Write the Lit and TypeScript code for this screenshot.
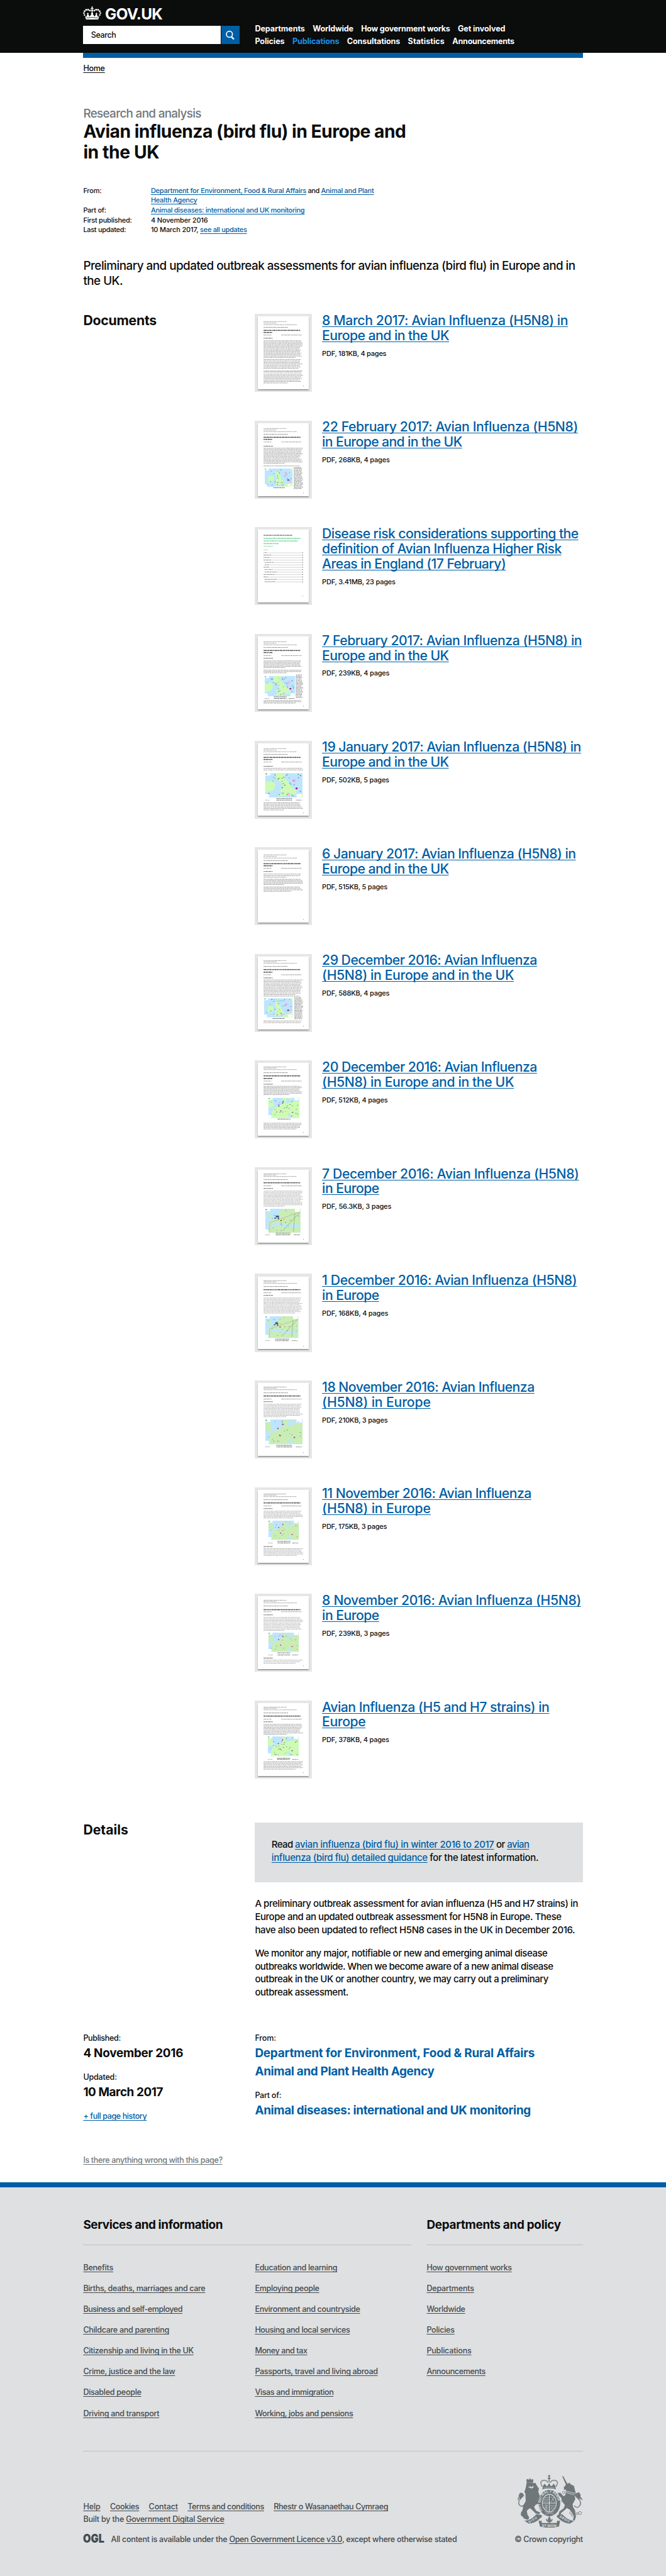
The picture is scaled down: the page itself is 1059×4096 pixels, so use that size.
import { LitElement, html, svg, css, unsafeCSS, nothing } from "lit";
import type { SVGTemplateResult } from "lit";
import { customElement, property } from "lit/decorators.js";

/** Page scale: the design grid is 1280 units wide. */
const SCALE = 1059 / 1280;
const u = (n: number) => unsafeCSS(`${(n * SCALE).toFixed(3)}px`);
/** Font sizes, corrected for the cap height of Inter. */
const f = (n: number) => unsafeCSS(`${(n * SCALE * 0.95).toFixed(3)}px`);

/** A run of text on one line, tracked so that it fills its measure. */
@customElement("fit-line")
class FitLine extends LitElement {
  static styles = css`
    :host {
      white-space: nowrap;
    }
  `;
  @property({ type: Number }) measure = 0;

  updated() {
    if (!this.measure) return;
    this.style.letterSpacing = "0";
    const natural = this.getBoundingClientRect().width;
    const count = (this.textContent ?? "").length;
    if (natural && count) {
      this.style.letterSpacing = `${((this.measure * SCALE - natural) / count).toFixed(4)}px`;
    }
  }

  render() {
    return html`<slot></slot>`;
  }
}

const fit = (measure: number, content: unknown) =>
  html`<fit-line .measure=${measure}>${content}</fit-line>`;

type Line = [number, string];
const lines = (items: Line[]) => items.map(([w, t], i) => html`${i ? html`<br />` : nothing}${fit(w, t)}`);

interface Thumb {
  title: number[];
  head: number[];
  date: number;
  blocks: [number, number][];
  map?: { x: number; y: number; w: number; h: number; kind: "uk" | "europe" | "channel" | "central" };
  side?: [number, number, number];
  caption?: number[];
  bold?: number[];
  soft?: boolean;
}

interface Doc {
  title: Line[];
  meta: Line;
  thumb: Thumb | "contents";
}

const DOCS: Doc[] = [
  {
    title: [[472.5, "8 March 2017: Avian Influenza (H5N8) in"], [244, "Europe and in the UK"]],
    meta: [123.5, "PDF, 181KB, 4 pages"],
    thumb: { head: [10, 13, 16, 21], title: [27, 31], date: 36, bold: [42], blocks: [[47, 79], [83, 100], [105, 107], [111, 128]] },
  },
  {
    title: [[491.5, "22 February 2017: Avian Influenza (H5N8)"], [269, "in Europe and in the UK"]],
    meta: [130, "PDF, 268KB, 4 pages"],
    thumb: {
      head: [10, 13, 16, 21], title: [27, 31], date: 36, bold: [44], blocks: [[48, 77], [82, 82]],
      map: { x: 13, y: 87, w: 54, h: 35, kind: "uk" }, side: [69, 85, 128], caption: [124],
    },
  },
  {
    title: [
      [492.5, "Disease risk considerations supporting the"],
      [460, "definition of Avian Influenza Higher Risk"],
      [353, "Areas in England (17 February)"],
    ],
    meta: [141, "PDF, 3.41MB, 23 pages"],
    thumb: "contents",
  },
  {
    title: [[499, "7 February 2017: Avian Influenza (H5N8) in"], [243.5, "Europe and in the UK"]],
    meta: [129.5, "PDF, 239KB, 4 pages"],
    thumb: {
      head: [10, 13, 16, 21], title: [27, 31], date: 37, bold: [42], blocks: [[47, 60], [65, 70], [123, 128]],
      map: { x: 13, y: 76, w: 59, h: 39, kind: "channel" }, side: [73, 74, 119], caption: [116, 119],
    },
  },
  {
    title: [[497.5, "19 January 2017: Avian Influenza (H5N8) in"], [243.5, "Europe and in the UK"]],
    meta: [129, "PDF, 502KB, 5 pages"],
    thumb: {
      head: [10, 13, 16, 21], title: [27, 31], date: 36, bold: [44], blocks: [[48, 51], [114, 128]],
      map: { x: 14, y: 57, w: 72, h: 47, kind: "channel" }, caption: [106, 109],
    },
  },
  {
    title: [[487.5, "6 January 2017: Avian Influenza (H5N8) in"], [243.5, "Europe and in the UK"]],
    meta: [125.5, "PDF, 515KB, 5 pages"],
    thumb: { head: [10, 13, 16, 21], title: [27, 31], date: 36, bold: [42], blocks: [[47, 53], [57, 67], [72, 80]] },
  },
  {
    title: [[413, "29 December 2016: Avian Influenza"], [368.5, "(H5N8) in Europe and in the UK"]],
    meta: [129.5, "PDF, 588KB, 4 pages"],
    thumb: {
      head: [8, 10, 13, 19], title: [25, 30], date: 35, bold: [41], blocks: [[45, 73], [76, 76], [124, 127]],
      map: { x: 12, y: 80, w: 55, h: 37, kind: "uk" }, side: [70, 79, 122], caption: [119],
    },
  },
  {
    title: [[413, "20 December 2016: Avian Influenza"], [368.5, "(H5N8) in Europe and in the UK"]],
    meta: [126, "PDF, 512KB, 4 pages"],
    thumb: {
      head: [8, 10, 13, 19], title: [25, 30], date: 35, bold: [41], blocks: [[45, 61], [116, 127]],
      map: { x: 20, y: 67, w: 60, h: 39, kind: "central" }, caption: [108],
    },
  },
  {
    title: [[493.5, "7 December 2016: Avian Influenza (H5N8)"], [109.5, "in Europe"]],
    meta: [133, "PDF, 56.3KB, 3 pages"],
    thumb: {
      head: [8, 10, 13, 19], title: [25], date: 31, bold: [36], blocks: [[41, 70]], soft: true,
      map: { x: 14, y: 75, w: 68, h: 46, kind: "europe" }, caption: [122, 125],
    },
  },
  {
    title: [[489.5, "1 December 2016: Avian Influenza (H5N8)"], [109.5, "in Europe"]],
    meta: [127, "PDF, 168KB, 4 pages"],
    thumb: {
      head: [8, 10, 13, 19], title: [25], date: 31, bold: [36], blocks: [[41, 70]], soft: true,
      map: { x: 14, y: 76, w: 64, h: 42, kind: "europe" }, caption: [120, 123],
    },
  },
  {
    title: [[408, "18 November 2016: Avian Influenza"], [208.5, "(H5N8) in Europe"]],
    meta: [126, "PDF, 210KB, 3 pages"],
    thumb: {
      head: [8, 10, 13, 19], title: [25], date: 31, bold: [36], blocks: [[41, 65]], soft: true,
      map: { x: 14, y: 70, w: 72, h: 48, kind: "central" }, caption: [120, 123],
    },
  },
  {
    title: [[402, "11 November 2016: Avian Influenza"], [208.5, "(H5N8) in Europe"]],
    meta: [124.5, "PDF, 175KB, 3 pages"],
    thumb: {
      head: [8, 10, 13, 19], title: [25], date: 31, bold: [36, 109], blocks: [[41, 54], [113, 126]], soft: true,
      map: { x: 20, y: 59, w: 59, h: 37, kind: "central" }, caption: [99, 102],
    },
  },
  {
    title: [[497.5, "8 November 2016: Avian Influenza (H5N8)"], [109.5, "in Europe"]],
    meta: [129.5, "PDF, 239KB, 3 pages"],
    thumb: {
      head: [8, 10, 13, 19], title: [26], date: 30, bold: [36, 119], blocks: [[41, 66], [123, 129]], soft: true,
      map: { x: 20, y: 70, w: 59, h: 37, kind: "central" }, caption: [109, 113],
    },
  },
  {
    title: [[436.5, "Avian Influenza (H5 and H7 strains) in"], [83.5, "Europe"]],
    meta: [129, "PDF, 378KB, 4 pages"],
    thumb: {
      head: [8, 10, 13, 19], title: [25], date: 31, bold: [36], blocks: [[41, 60], [113, 127]],
      map: { x: 19, y: 64, w: 60, h: 38, kind: "central" }, caption: [106, 108],
    },
  },
];

/** Small repeatable pseudo-random source, so every thumbnail differs but is stable. */
const noise = (seed: number) => {
  const v = Math.sin(seed * 12.9898) * 43758.5453;
  return v - Math.floor(v);
};

const textRow = (x1: number, x2: number, y: number, color: string, weight: number, seed: number) => {
  const parts: SVGTemplateResult[] = [];
  let x = x1;
  let i = 0;
  while (x < x2) {
    const w = Math.min(1.6 + noise(seed + i * 1.7) * 4.4, x2 - x);
    parts.push(svg`<rect x=${x} y=${y - weight / 2} width=${w} height=${weight} fill=${color}></rect>`);
    x += w + 0.7;
    i++;
  }
  return parts;
};

const MAPS = {
  uk: svg`<path d="M40 8 L52 10 L48 20 L56 24 L60 40 L70 52 L62 62 L36 66 L44 54 L38 48 L46 38 L38 28 Z M14 30 L30 28 L34 40 L28 50 L12 52 Z M70 62 L100 50 V70 H60 Z M88 0 H100 V14 Z"></path>`,
  channel: svg`<path d="M28 0 H54 L50 14 L62 26 L74 44 L84 50 L82 62 L60 64 L34 68 L46 56 L36 52 L48 42 L44 28 L30 20 Z M0 26 L22 22 L28 34 L22 50 L0 56 Z M92 62 H100 V70 H92 Z"></path>`,
  europe: svg`<path d="M30 22 L40 12 L50 0 H100 V48 L80 44 L66 52 L56 44 L48 46 L40 38 L30 44 L20 44 L14 34 L28 32 Z M10 14 L18 12 L20 26 L10 26 Z M12 54 L40 48 L60 56 L100 52 V70 H8 Z M8 40 L20 42 L18 52 L8 52 Z"></path>`,
  central: svg`<path d="M0 10 L10 6 L20 26 L12 34 L0 34 Z M44 24 L48 2 L60 0 L56 20 L78 14 L100 10 V70 H78 L66 52 L60 56 L70 70 H10 L12 44 L22 34 Z M66 0 H76 L70 12 Z"></path>`,
};

const mapDrawing = (m: NonNullable<Thumb["map"]>, seed: number, soft: boolean) => svg`
  <svg x=${m.x} y=${m.y} width=${m.w} height=${m.h} viewBox="0 0 100 70" preserveAspectRatio="none">
    <rect width="100" height="70" fill="#bde5ff"></rect>
    <g fill=${soft ? "#c9edb4" : "#cdfbb5"}>${MAPS[m.kind]}</g>
    <rect x="0" y="0" width="14" height="7" fill="#fff"></rect>
    <rect x="1" y="1" width="4" height="3" fill="#39a08c"></rect>
    <rect x="0" y="60" width="10" height="10" fill="#fff"></rect>
    <rect x="84" y=${m.kind === "central" || m.kind === "europe" ? 0 : 60} width="14" height="9" fill="#fff"></rect>
    ${m.kind === "uk" || m.kind === "channel"
      ? svg`<circle cx="78" cy="22" r="5" fill="#f9b3e0"></circle><circle cx="62" cy="60" r="4" fill="#f9b3e0"></circle><circle cx="84" cy="44" r="3" fill="#a3249a"></circle>`
      : nothing}
    ${m.kind === "europe"
      ? svg`<g fill="none"><path d="M12 70 L14 40 L98 10" stroke="#cc9fae" stroke-width="1.2"></path><path d="M98 10 L50 64 M84 12 L80 66" stroke="#6d8f7c" stroke-width="1"></path></g>
          <g fill="#2c4f8c"><rect x="30" y="20" width="9" height="5"></rect><rect x="26" y="26" width="5" height="3"></rect><rect x="36" y="25" width="3" height="6"></rect></g>
          <rect x="43" y="33" width="4" height="3" fill="#c63a3a"></rect>`
      : nothing}
    ${m.kind === "central"
      ? svg`<g fill="#c0278f"><rect x="46" y="12" width="3" height="4"></rect><rect x="32" y="24" width="4" height="3"></rect><rect x="38" y="44" width="4" height="3"></rect><rect x="76" y="49" width="4" height="3"></rect></g>`
      : nothing}
    ${Array.from({ length: soft ? 16 : 30 }, (_, i) => svg`<rect x=${8 + noise(seed + i) * 86} y=${3 + noise(seed * 3 + i * 2.3) * 62} width=${1.4 + noise(i) * 2.4} height="1.4" fill=${soft ? "#64786e" : "#2c3b37"}></rect>`)}
  </svg>
`;

const CONTENTS_ROWS = [0, 1, 2, 3, 4, 5, 6, 7, 8, 9, 10, 11, 12];

const thumbnail = (t: Thumb | "contents", seed: number) => {
  if (t === "contents") {
    const indent = [4, 5, 7, 8, 11, 12];
    return svg`
      ${textRow(11, 66, 11, "#444", 1.2, 3)}
      ${textRow(11, 82, 17, "#7fd8a2", 1.9, 4)}
      ${textRow(11, 77, 22, "#7fd8a2", 1.9, 5)}
      ${textRow(11, 40, 27, "#7fd8a2", 1.9, 6)}
      ${textRow(11, 29, 32, "#8fd9aa", 1.4, 7)}
      ${textRow(11, 20, 39, "#8fd9aa", 1.2, 8)}
      ${CONTENTS_ROWS.map((r) => {
        const x = indent.includes(r) ? 13 : 11;
        const y = 44.5 + r * 4.65;
        const end = x + 6 + noise(r + 2) * 18;
        return svg`${textRow(x, end, y, "#777", 1, r)}<path d="M${end + 1} ${y + 0.3} H84" stroke="#aaa" stroke-width=".6"></path><rect x="85" y=${y - 0.6} width="1.6" height="1.3" fill="#555"></rect>`;
      })}
      <rect x="85.500" y="127" width="1" height="1.500" fill="#999"></rect>
    `;
  }
  const ink = t.soft ? "#ababab" : "#989898";
  const ends = [55, 36, 75, 58];
  return svg`
    ${t.head.map((y, i) => textRow(11, ends[i], y, i === 3 ? "#808080" : "#999", 1, seed + i))}
    ${t.title.map((y, i) => textRow(11, i ? 28 : 82, y, "#505050", 1.8, seed + 9 + i))}
    ${textRow(11, 26, t.date, "#8c8c8c", 1, seed)}${textRow(45, 84, t.date, "#8c8c8c", 1, seed + 5)}
    ${(t.bold ?? []).map((y) => textRow(11, 29, y, "#666", 1.2, seed + y))}
    ${t.blocks.map(([from, to]) => {
      const count = Math.max(1, Math.round((to - from) / 2.7) + 1);
      return Array.from({ length: count }, (_, i) => {
        const y = count > 1 ? from + ((to - from) / (count - 1)) * i : from;
        const end = i === count - 1 && count > 2 ? 50 + noise(y + seed) * 30 : 80 + noise(y * seed) * 7;
        return textRow(11, end, y, ink, 1.1, y + seed * 7);
      });
    })}
    ${t.side
      ? Array.from({ length: Math.round((t.side[2] - t.side[1]) / 2.7) }, (_, i) =>
          textRow(t.side![0], 83 + noise(i + seed) * 4, t.side![1] + i * 2.7, "#7d7d7d", 1.1, i + seed))
      : nothing}
    ${t.map ? mapDrawing(t.map, seed + 11, !!t.soft) : nothing}
    ${t.map && t.caption
      ? t.caption.map((y, i) => svg`${textRow(t.map!.x + t.map!.w * 0.3, t.map!.x + t.map!.w * 0.72, y, "#6f6f6f", 1.2, y)}${i ? svg`${textRow(t.map!.x, t.map!.x + 9, y, "#999", 0.9, y + 2)}${textRow(t.map!.x + t.map!.w - 13, t.map!.x + t.map!.w - 1, y, "#777", 1, y + 3)}` : nothing}`)
      : nothing}
    <rect x="87" y="133" width="1.200" height="1.500" fill="#999"></rect>
  `;
};

const crown = html`<svg class="crown" viewBox="0 0 35 26" fill="#fff" aria-hidden="true">
  <g>
    <circle cx="17.500" cy="1.800" r="1.400"></circle>
    <rect x="16.700" y="2" width="1.600" height="7"></rect>
    <rect x="14.600" y="3.800" width="5.800" height="1.500"></rect>
    <circle cx="17.500" cy="8.500" r="2"></circle>
    <circle cx="13.300" cy="8.300" r="1.700"></circle><circle cx="21.700" cy="8.300" r="1.700"></circle>
    <circle cx="9.800" cy="6.600" r="1.800"></circle><circle cx="25.200" cy="6.600" r="1.800"></circle>
    <circle cx="6" cy="7" r="1.800"></circle><circle cx="29" cy="7" r="1.800"></circle>
    <circle cx="3" cy="9.500" r="1.700"></circle><circle cx="32" cy="9.500" r="1.700"></circle>
    <circle cx="1.700" cy="13" r="1.600"></circle><circle cx="33.300" cy="13" r="1.600"></circle>
    <circle cx="2.800" cy="16.500" r="1.500"></circle><circle cx="32.200" cy="16.500" r="1.500"></circle>
    <path d="M3.600 18.200 L5.800 25.500 H29.200 L31.400 18.200 L29 20.600 L26.500 15.500 L27.700 14.400 L25.800 12 L24 14.400 L25 15.500 L22.300 19.500 L18.800 15 L19.800 13.600 L17.500 10.600 L15.200 13.600 L16.200 15 L12.700 19.500 L10 15.500 L11 14.400 L9.200 12 L7.300 14.400 L8.500 15.500 L6 20.600 Z"></path>
  </g>
  <path d="M6.500 22.600 Q17.500 20.400 28.500 22.600" fill="none" stroke="#0b0c0c" stroke-width="1"></path>
</svg>`;

const searchIcon = html`<svg class="search-icon" viewBox="0 0 35 36" fill="none" stroke="#fff" aria-hidden="true">
  <circle cx="15.500" cy="16.300" r="5.800" stroke-width="2"></circle>
  <path d="M19.300 20.800 L24 26" stroke-width="2.800"></path>
</svg>`;

const coatOfArms = html`<svg class="arms" viewBox="45 20 375 306" fill="#6f777b" aria-hidden="true">
  <!-- lion -->
  <path d="M97 66 L150 68 L152 76 L168 100 L164 118 L172 140 L176 152 L184 160 L190 172 L176 176 L182 190 L178 206 L168 186 L150 192 L140 206 L152 228 L176 238 L170 248 L150 244 L128 222 L116 212 L98 228 L102 250 L112 266 L106 280 L84 274 L74 262 L64 254 L64 240 L74 222 L78 196 L92 172 L90 128 L84 120 L92 96 Z"></path>
  <path d="M97 66 L96 48 L104 44 L110 50 L116 38 L122 50 L130 44 L136 50 L134 66 Z"></path>
  <path d="M106 92 L120 86 L124 94 L132 84 L138 90 L132 97 L126 99 L120 97 Z" fill="#dee0e2"></path>
  <path d="M80 196 Q66 210 54 192 Q46 176 62 158 L78 142 Q62 144 56 160 M78 142 Q80 128 62 126 Q50 134 56 148 Q48 150 48 166" fill="none" stroke="#6f777b" stroke-width="5"></path>
  <path d="M62 125 Q80 124 76 144 L62 160 Q50 150 62 125 Z"></path>
  <!-- unicorn -->
  <path d="M302 28 L308 28 L332 72 L346 66 L350 74 L370 84 L376 110 L384 136 L374 142 L378 160 L370 176 L362 190 L366 208 L376 224 L382 262 L374 284 L364 280 L370 258 L360 238 L344 220 L330 212 L314 226 L296 240 L290 262 L280 254 L286 232 L310 214 L318 196 L304 176 L296 152 L284 140 L276 124 L292 124 L308 142 L320 140 L324 106 L312 106 L312 92 L324 78 Z"></path>
  <path d="M316 112 L380 128 M314 120 L372 136" stroke="#dee0e2" stroke-width="3"></path>
  <path d="M372 198 Q388 218 404 198 Q416 180 396 160 L380 144 Q400 146 408 162 M382 144 Q378 126 398 124 Q410 136 404 150 Q418 156 416 166" fill="none" stroke="#6f777b" stroke-width="5"></path>
  <path d="M398 123 Q378 124 384 146 L398 160 Q412 150 398 123 Z"></path>
  <g fill="none" stroke="#6f777b" stroke-width="3">
    <circle cx="311" cy="122" r="7"></circle><circle cx="304" cy="170" r="6"></circle>
    <circle cx="405" cy="241" r="9"></circle><circle cx="389" cy="244" r="6"></circle><circle cx="352" cy="240" r="7"></circle><circle cx="362" cy="254" r="6"></circle>
  </g>
  <!-- crown -->
  <circle cx="227" cy="27" r="6"></circle>
  <path d="M224 30 H230 V60 H224 Z M218 38 H236 V44 H218 Z"></path>
  <path d="M188 88 Q170 62 188 54 Q208 46 222 66 M266 88 Q284 62 266 54 Q246 46 232 66" fill="none" stroke="#6f777b" stroke-width="6" stroke-dasharray="6 1.500"></path>
  <path d="M190 92 L194 80 L202 72 L210 84 L218 84 L227 68 L236 84 L244 84 L252 72 L260 80 L264 92 L266 104 Q227 94 188 104 Z"></path>
  <path d="M196 97 Q227 88 258 97" fill="none" stroke="#dee0e2" stroke-width="3" stroke-dasharray="7 4"></path>
  <!-- garter and shield -->
  <ellipse cx="228" cy="183" rx="63" ry="76"></ellipse>
  <ellipse cx="228" cy="183" rx="42" ry="52" fill="#dee0e2"></ellipse>
  <ellipse cx="228" cy="183" rx="38" ry="48"></ellipse>
  <path d="M228 137 V231 M191 183 H265" stroke="#dee0e2" stroke-width="4"></path>
  <path d="M196 152 H222 M196 162 H222 M194 172 H222 M234 198 H260 M234 208 H256 M234 218 H250 M240 146 L256 174 M256 150 L238 176 M204 192 V218 M210 192 V222 M216 192 V226" stroke="#dee0e2" stroke-width="3" stroke-dasharray="5 2"></path>
  <path id="garter" d="M188 228 A52 64 0 1 1 268 228" fill="none"></path>
  <text class="arms-text" font-size="19" fill="#dee0e2"><textPath href="#garter">SOIT QUI MAL Y PENSE</textPath></text>
  <path d="M200 232 L256 248 M256 232 L204 248" stroke="#dee0e2" stroke-width="2"></path>
  <!-- motto ribbon -->
  <path d="M82 284 Q116 290 154 248 L182 252 Q192 262 176 270 Q146 300 110 302 Z M374 284 Q340 290 302 248 L276 252 Q264 262 280 270 Q310 300 346 302 Z"></path>
  <path d="M166 284 Q182 290 180 280 L186 298 H270 L276 280 Q274 290 290 284 L284 318 Q228 334 174 318 Z"></path>
  <path d="M228 262 Q216 280 226 294 H230 Q240 280 228 262 Z M212 274 Q210 290 222 288 M244 274 Q246 290 234 288 M218 292 H238 M228 290 V302" stroke="#6f777b" stroke-width="4"></path>
  <text class="arms-text" x="186" y="322" font-size="21" fill="#dee0e2" textLength="84">ET MON</text>
  <text class="arms-text" x="112" y="300" font-size="18" fill="#dee0e2" textLength="54" transform="rotate(-32 112 300)">DIEU</text>
  <text class="arms-text" x="286" y="264" font-size="18" fill="#dee0e2" textLength="64" transform="rotate(32 286 264)">DROIT</text>
</svg>`;

const NAV: Line[][] = [
  [[96, "Departments"], [78, "Worldwide"], [171, "How government works"], [91, "Get involved"]],
  [[57, "Policies"], [90, "Publications"], [102, "Consultations"], [70.5, "Statistics"], [119, "Announcements"]],
];

const SERVICES: Line[][] = [
  [
    [57.5, "Benefits"], [234.5, "Births, deaths, marriages and care"], [190.5, "Business and self-employed"],
    [165, "Childcare and parenting"], [212, "Citizenship and living in the UK"], [176.5, "Crime, justice and the law"],
    [111.5, "Disabled people"], [146, "Driving and transport"],
  ],
  [
    [158, "Education and learning"], [123.5, "Employing people"], [202, "Environment and countryside"],
    [182.5, "Housing and local services"], [100.5, "Money and tax"], [236, "Passports, travel and living abroad"],
    [151, "Visas and immigration"], [188.5, "Working, jobs and pensions"],
  ],
];

const POLICY: Line[] = [
  [163.5, "How government works"], [91, "Departments"], [74, "Worldwide"],
  [53.5, "Policies"], [86, "Publications"], [113, "Announcements"],
];

@customElement("app-root")
class AppRoot extends LitElement {
  static styles = css`
    :host {
      display: block;
      width: 1059px;
      height: 4096px;
      overflow: hidden;
      background: #fff;
      color: #0b0c0c;
      font-family: Inter, "Liberation Sans", sans-serif;
      font-size: ${f(16)};
      font-weight: 460;
      line-height: ${u(20)};
      font-kerning: normal;
    }
    * { box-sizing: border-box; }
    h1, h2, p, ul { margin: 0; padding: 0; font-weight: inherit; }
    ul { list-style: none; }
    a {
      color: #005ea5;
      text-decoration: underline;
      text-decoration-thickness: 1px;
      text-underline-offset: ${u(2)};
      text-decoration-skip-ink: none;
    }
    .wrap { width: ${u(960)}; margin: 0 auto; }

    .header { height: ${u(101)}; background: #0b0c0c; color: #fff; }
    .header-grid { display: grid; grid-template-columns: ${u(300)} 1fr; column-gap: ${u(30)}; }
    .brand { display: flex; gap: ${u(7)}; padding-top: ${u(12)}; height: ${u(49)}; }
    .crown { width: ${u(35)}; height: ${u(26)}; }
    .brand-name { font-size: ${f(31)}; font-weight: 700; line-height: ${u(29)}; }
    .search { display: flex; gap: ${u(1)}; height: ${u(36)}; }
    .search-field { width: ${u(264)}; background: #fff; color: #0b0c0c; padding-left: ${u(15)}; line-height: ${u(36)}; }
    .search-icon { width: ${u(35)}; height: ${u(36)}; background: #005ea5; }
    .nav { padding-top: ${u(43.4)}; font-weight: 700; }
    .nav-row { display: flex; gap: ${u(15)}; height: ${u(24)}; line-height: ${u(24)}; }
    .nav-row a { color: #fff; text-decoration: none; }
    .nav-row .active { color: #1d8feb; }
    .bar { height: ${u(10)}; background: #005ea5; }

    .crumb { padding-top: ${u(10.6)}; height: ${u(31)}; }
    .crumb a { color: #0b0c0c; }
    .kicker { margin-top: ${u(61.8)}; font-size: ${f(24)}; line-height: ${u(30)}; color: #6f777b; }
    .title { font-size: ${f(36)}; line-height: ${u(39)}; font-weight: 700; }
    .meta { display: grid; grid-template-columns: ${u(130)} 1fr; margin-top: ${u(45.5)}; font-size: ${f(14)}; line-height: ${u(19)}; }
    .intro { margin-top: ${u(44.1)}; font-size: ${f(24)}; line-height: ${u(30)}; }

    .section { display: grid; grid-template-columns: ${u(330)} 1fr; }
    .section-title { margin-top: ${u(-2.1)}; font-size: ${f(27)}; line-height: ${u(30)}; font-weight: 700; }
    .docs { margin-top: ${u(47)}; }
    .doc-list { display: grid; row-gap: ${u(55)}; }
    .doc { display: flex; gap: ${u(20)}; height: ${u(150)}; }
    .thumb { flex: none; width: ${u(109)}; height: ${u(150)}; background: #e6e6e6; padding: ${u(5)}; }
    .page { display: block; width: ${u(99)}; height: ${u(140)}; background: #fff; box-shadow: 0 ${u(2)} ${u(2)} rgba(11, 12, 12, 0.4); }
    .doc-title { margin-top: ${u(-1.6)}; font-size: ${f(27)}; line-height: ${u(28.9)}; }
    .doc-meta { margin-top: ${u(10.9)}; font-size: ${f(14)}; line-height: ${u(19)}; }

    .details { margin-top: ${u(85)}; font-size: ${f(19)}; line-height: ${u(25)}; }
    .callout { height: ${u(114)}; padding: ${u(30.1)} 0 0 ${u(32)}; background: #dee0e2; margin-bottom: ${u(30.1)}; }
    .details p + p { margin-top: ${u(20)}; }

    .facts { margin-top: ${u(65.5)}; }
    .fact-value { margin-top: ${u(4.3)}; font-size: ${f(24)}; line-height: ${u(30)}; font-weight: 700; }
    .fact-value a { text-decoration: none; }
    .fact-next { margin-top: ${u(20.7)}; }
    .fact-tight { margin-top: ${u(5)}; }
    .report { margin: ${u(65)} 0 ${u(31.4)}; }
    .report a { color: #6f777b; }

    .footer { border-top: ${u(10)} solid #005ea5; background: #dee0e2; height: ${u(759)}; padding-top: ${u(57.9)}; color: #454a4c; }
    .footer a { color: #454a4c; }
    .footer-groups { display: grid; grid-template-columns: ${u(630)} ${u(300)}; column-gap: ${u(30)}; }
    .footer-title { color: #0b0c0c; font-size: ${f(24)}; line-height: ${u(30)}; font-weight: 700; padding-bottom: ${u(22)}; border-bottom: 1px solid #bfc1c3; margin-bottom: ${u(34)}; }
    .footer-cols { display: grid; grid-template-columns: ${u(330)} ${u(300)}; }
    .links { display: grid; row-gap: ${u(20)}; grid-auto-rows: ${u(20)}; align-content: start; }
    .footer-bottom { display: flex; justify-content: space-between; margin-top: ${u(61.1)}; border-top: 1px solid #bfc1c3; line-height: ${u(24)}; }
    .legal { padding-top: ${u(94.3)}; }
    .legal-links { display: flex; gap: ${u(18.5)}; }
    .licence { display: flex; gap: ${u(12.5)}; margin-top: ${u(15.5)}; }
    .ogl { width: ${u(41)}; height: ${u(17)}; margin-top: ${u(1.4)}; overflow: visible; }
    .ogl text { font-weight: 900; fill: #454a4c; }
    .crest { display: flex; flex-direction: column; align-items: flex-end; padding-top: ${u(45)}; }
    .arms { width: ${u(125)}; height: ${u(102)}; margin-bottom: ${u(10)}; }
    .arms-text { font-family: "Open Sans", sans-serif; font-weight: 700; }
  `;

  private linkList(items: Line[]) {
    return html`<ul class="links">${items.map(([w, t]) => html`<li><a>${fit(w, t)}</a></li>`)}</ul>`;
  }

  private header() {
    return html`<header class="header">
      <div class="wrap header-grid">
        <div>
          <div class="brand">${crown}<span class="brand-name">${fit(110, "GOV.UK")}</span></div>
          <div class="search"><div class="search-field">${fit(48, "Search")}</div>${searchIcon}</div>
        </div>
        <nav class="nav">
          ${NAV.map((row) => html`<div class="nav-row">
            ${row.map(([w, t]) => html`<a class=${t === "Publications" ? "active" : ""}>${fit(w, t)}</a>`)}
          </div>`)}
        </nav>
      </div>
    </header>`;
  }

  private summary() {
    return html`<div class="crumb"><a>${fit(41.5, "Home")}</a></div>
      <p class="kicker">${fit(226.5, "Research and analysis")}</p>
      <h1 class="title">${lines([[620, "Avian influenza (bird flu) in Europe and"], [146, "in the UK"]])}</h1>
      <div class="meta">
        <div>${fit(35, "From:")}</div>
        <div><a>${fit(298.5, "Department for Environment, Food & Rural Affairs")}</a>${fit(28.5, html`&nbsp;and&nbsp;`)}<a>${fit(101.5, "Animal and Plant")}</a><br /><a>${fit(89, "Health Agency")}</a></div>
        <div>${fit(44, "Part of:")}</div>
        <div><a>${fit(295.5, "Animal diseases: international and UK monitoring")}</a></div>
        <div>${fit(93.5, "First published:")}</div>
        <div>${fit(109.5, "4 November 2016")}</div>
        <div>${fit(82, "Last updated:")}</div>
        <div>${fit(94.5, html`10 March 2017,&nbsp;`)}<a>${fit(90, "see all updates")}</a></div>
      </div>
      <p class="intro">
        ${lines([
          [945.5, "Preliminary and updated outbreak assessments for avian influenza (bird flu) in Europe and in"],
          [76, "the UK."],
        ])}
      </p>`;
  }

  private documents() {
    return html`<section class="section docs">
      <h2 class="section-title">${fit(141, "Documents")}</h2>
      <div class="doc-list">
        ${DOCS.map((d, i) => html`<article class="doc">
          <div class="thumb"><svg class="page" viewBox="0 0 99 140" aria-hidden="true">${thumbnail(d.thumb, i + 1)}</svg></div>
          <div>
            <h2 class="doc-title"><a>${lines(d.title)}</a></h2>
            <p class="doc-meta">${fit(d.meta[0], d.meta[1])}</p>
          </div>
        </article>`)}
      </div>
    </section>`;
  }

  private details() {
    return html`<section class="section details">
      <h2 class="section-title">${fit(86.5, "Details")}</h2>
      <div>
        <div class="callout">
          ${fit(45, html`Read&nbsp;`)}<a>${fit(382.5, "avian influenza (bird flu) in winter 2016 to 2017")}</a>${fit(25, html`&nbsp;or&nbsp;`)}<a>${fit(42.5, "avian")}<br />${fit(299.5, "influenza (bird flu) detailed guidance")}</a>${fit(213.5, html`&nbsp;for the latest information.`)}
        </div>
        <p>
          ${lines([
            [620.7, "A preliminary outbreak assessment for avian influenza (H5 and H7 strains) in"],
            [589, "Europe and an updated outbreak assessment for H5N8 in Europe. These"],
            [615, "have also been updated to reflect H5N8 cases in the UK in December 2016."],
          ])}
        </p>
        <p>
          ${lines([
            [562, "We monitor any major, notifiable or new and emerging animal disease"],
            [573, "outbreaks worldwide. When we become aware of a new animal disease"],
            [564, "outbreak in the UK or another country, we may carry out a preliminary"],
            [179.5, "outbreak assessment."],
          ])}
        </p>
      </div>
    </section>`;
  }

  private facts() {
    return html`<section class="section facts">
        <div>
          <div>${fit(72, "Published:")}</div>
          <div class="fact-value">${fit(192, "4 November 2016")}</div>
          <div class="fact-next">${fit(64.5, "Updated:")}</div>
          <div class="fact-value">${fit(153, "10 March 2017")}</div>
          <div class="fact-next"><a>${fit(122, "+ full page history")}</a></div>
        </div>
        <div>
          <div>${fit(40.5, "From:")}</div>
          <div class="fact-value"><a>${fit(537.5, "Department for Environment, Food & Rural Affairs")}</a></div>
          <div class="fact-value fact-tight"><a>${fit(344.5, "Animal and Plant Health Agency")}</a></div>
          <div class="fact-next">${fit(50.5, "Part of:")}</div>
          <div class="fact-value"><a>${fit(530, "Animal diseases: international and UK monitoring")}</a></div>
        </div>
      </section>
      <div class="report"><a>${fit(267.5, "Is there anything wrong with this page?")}</a></div>`;
  }

  private footer() {
    return html`<footer class="footer">
      <div class="wrap">
        <div class="footer-groups">
          <div>
            <h2 class="footer-title">${fit(268, "Services and information")}</h2>
            <div class="footer-cols">${SERVICES.map((c) => this.linkList(c))}</div>
          </div>
          <div>
            <h2 class="footer-title">${fit(258, "Departments and policy")}</h2>
            ${this.linkList(POLICY)}
          </div>
        </div>
        <div class="footer-bottom">
          <div class="legal">
            <div class="legal-links">
              <a>${fit(33, "Help")}</a><a>${fit(56, "Cookies")}</a><a>${fit(56, "Contact")}</a><a>${fit(147, "Terms and conditions")}</a><a>${fit(220, "Rhestr o Wasanaethau Cymraeg")}</a>
            </div>
            <div>${fit(82, html`Built by the&nbsp;`)}<a>${fit(189, "Government Digital Service")}</a></div>
            <div class="licence">
              <svg class="ogl" viewBox="0 0 41 17"><text x="0" y="17" font-size="23" textLength="41" lengthAdjust="spacingAndGlyphs">OGL</text></svg>
              <div>${fit(227, html`All content is available under the&nbsp;`)}<a>${fit(217, "Open Government Licence v3.0")}</a>${fit(220.5, ", except where otherwise stated")}</div>
            </div>
          </div>
          <div class="crest">${coatOfArms}<div>${fit(131, "© Crown copyright")}</div></div>
        </div>
      </div>
    </footer>`;
  }

  render() {
    return html`${this.header()}
      <main class="wrap">
        <div class="bar"></div>
        ${this.summary()} ${this.documents()} ${this.details()} ${this.facts()}
      </main>
      ${this.footer()}`;
  }
}
